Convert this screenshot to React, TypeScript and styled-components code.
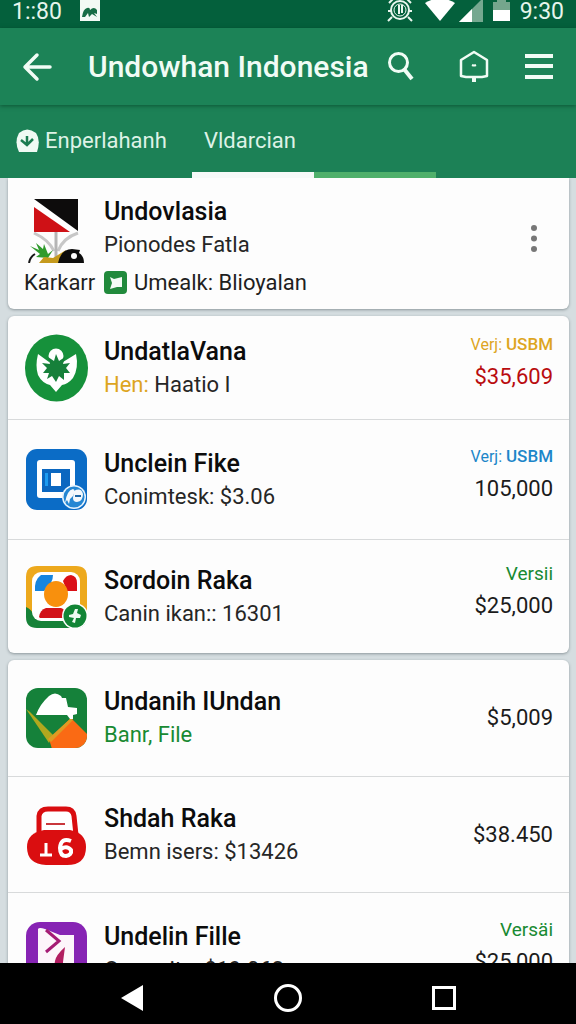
import React from "react";
import styled, { createGlobalStyle } from "styled-components";

const GlobalStyle = createGlobalStyle`
  * { box-sizing: border-box; }
  body {
    margin: 0;
    background: #d5dde0;
    font-family: Roboto, "Noto Sans", sans-serif;
    color: #1f1f1f;
  }
  button { font: inherit; color: inherit; background: none; border: 0; padding: 0; cursor: pointer; }
  a { color: inherit; text-decoration: none; }
  svg { display: block; }
  h1, h2, p, ul { margin: 0; padding: 0; }
`;

const Screen = styled.div`
  display: flex;
  flex-direction: column;
  height: 100vh;
`;

const StatusBar = styled.div`
  display: flex;
  justify-content: space-between;
  flex: none;
  height: 28px;
  padding: 0 12px;
  background: #04603c;
  color: #e6f5ec;
  font-size: 23px;
  line-height: 24px;
`;

const StatusGroup = styled.div<{ $gap: number }>`
  display: flex;
  gap: ${(p) => p.$gap}px;
`;

const AppBar = styled.header`
  display: flex;
  align-items: center;
  flex: none;
  height: 77px;
  padding: 0 22px 0 20px;
  background: #1c8357;
  color: #f1fcf5;
  box-shadow: 0 1px 4px rgba(0, 50, 25, 0.55);
  z-index: 1;
`;

const BarTitle = styled.h1`
  margin-left: 32px;
  flex: none;
  font-size: 30px;
  line-height: 40px;
  font-weight: 500;
  white-space: nowrap;
`;

const BarActions = styled.div`
  display: flex;
  flex: 1;
  align-items: center;
  gap: 30px;
  margin-left: 14px;
`;

const IconButton = styled.button`
  flex: none;
`;

const SearchButton = styled(IconButton)`
  margin-right: auto;
`;

const MoreButton = styled(IconButton)`
  margin-bottom: 16px;
`;

const Tabs = styled.nav`
  display: flex;
  flex: none;
  height: 73px;
  background: #1c8156;
  color: #def2e6;
`;

const Tab = styled.a<{ $line: string; $wide?: boolean }>`
  display: flex;
  align-items: center;
  gap: 6px;
  flex: none;
  width: ${(p) => (p.$wide ? 192 : 122)}px;
  padding: 4px 0 0 ${(p) => (p.$wide ? 16 : 12)}px;
  border-bottom: 6px solid ${(p) => p.$line};
  font-size: 22px;
  white-space: nowrap;
`;

const Main = styled.main`
  display: flex;
  flex-direction: column;
  gap: 7px;
  flex: 1;
  min-height: 0;
  overflow: hidden;
  padding: 0 7px 0 8px;
`;

const Card = styled.section<{ $attached?: boolean }>`
  flex: none;
  background: #fdfdfd;
  border-radius: ${(p) => (p.$attached ? "0 0 6px 6px" : "6px")};
  box-shadow: 0 1px 3px rgba(50, 65, 70, 0.45);
`;

const Featured = styled.div`
  display: flex;
  justify-content: space-between;
  align-items: center;
  height: 131px;
  padding: 6px 26px 0 16px;
`;

const FeaturedGrid = styled.div`
  display: grid;
  grid-template-columns: 64px auto;
  column-gap: 16px;
  row-gap: 4px;
  align-items: start;
`;

const Caption = styled.p`
  display: flex;
  align-items: center;
  gap: 7px;
  font-size: 22px;
  line-height: 32px;
  white-space: nowrap;
`;

const List = styled.ul`
  list-style: none;
`;

const Row = styled.li<{ $height: number }>`
  display: flex;
  align-items: center;
  gap: 16px;
  height: ${(p) => p.$height}px;
  padding: 0 16px;
  & + & { border-top: 1px solid #d8dadb; }
`;

const Body = styled.div`
  flex: 1;
  min-width: 0;
`;

const Name = styled.h2`
  font-size: 25px;
  line-height: 33px;
  font-weight: 500;
  color: #0c0c0c;
  white-space: nowrap;
`;

const Detail = styled.p<{ $color?: string }>`
  font-size: 22px;
  line-height: 33px;
  color: ${(p) => p.$color ?? "#262626"};
  white-space: nowrap;
`;

const Tint = styled.span<{ $color: string }>`
  color: ${(p) => p.$color};
`;

const Side = styled.div<{ $raised: boolean }>`
  flex: none;
  text-align: right;
  padding-bottom: ${(p) => (p.$raised ? 14 : 0)}px;
`;

const Label = styled.p<{ $color: string; $large?: boolean }>`
  font-size: ${(p) => (p.$large ? 19 : 16)}px;
  line-height: 32px;
  color: ${(p) => p.$color};
  b { font-size: 17px; font-weight: 500; }
`;

const Price = styled.p<{ $color?: string }>`
  font-size: 22px;
  line-height: 32px;
  color: ${(p) => p.$color ?? "#1b1b1b"};
`;

const NavBar = styled.footer`
  display: flex;
  justify-content: center;
  align-items: center;
  gap: 124px;
  flex: none;
  height: 61px;
  padding-top: 8px;
  background: #000;
`;

const LeafIcon = () => (
  <svg width="64" height="68" viewBox="0 0 64 68" aria-hidden="true">
    <ellipse cx="32.500" cy="34" rx="31.500" ry="33.500" fill="#16913b" />
    <circle cx="32" cy="22" r="7.500" fill="#fff" />
    <path d="M14 20 L25 28 L32 24 L39 28 L52 20 Q55 34 49 44 Q44 50 38 51 L32 58 L26 51 Q18 49 14 41 Q11 32 14 20Z" fill="#fff" />
    <path d="M32 20 L35 27 L41 23 L39 30 L46 29 L42 34 L46 39 L40 39 L40 46 L35 42 L32 48 L28 42 L23 45 L25 39 L19 39 L23 34 L18 29 L26 30 L24 23 L30 27Z" fill="#16803a" />
  </svg>
);

const FrameIcon = () => (
  <svg width="64" height="64" viewBox="0 0 64 64" aria-hidden="true">
    <rect x="2" y="1" width="61" height="61" rx="11" fill="#0b6cc6" />
    <rect x="13" y="12" width="38" height="38" rx="3" fill="#fff" />
    <rect x="18" y="21" width="28" height="23" fill="#0b67c0" />
    <rect x="21" y="25" width="3" height="13" fill="#1e9cf0" />
    <rect x="27" y="25" width="10" height="13" fill="#fff" />
    <circle cx="50" cy="49" r="12" fill="#e8f4fd" />
    <circle cx="50" cy="49" r="10.500" fill="#2587d3" />
    <path d="M41 55 Q43 42 49 41 Q52 42 49 48 L46 51 L45 56 L43 52Z" fill="#f3f8fc" />
    <path d="M50 43 Q57 39 59 46 Q59 53 53 54 Q49 54 49 50Z" fill="#f3f8fc" />
    <path d="M51 48h6" stroke="#1c65a5" strokeWidth="2" />
  </svg>
);

const PeopleIcon = () => (
  <svg width="64" height="64" viewBox="0 0 64 64" aria-hidden="true">
    <path d="M2 43 V12 Q2 1 13 1 H52 Q63 1 63 12 V50 H2Z" fill="#eda91d" />
    <path d="M2 42 Q7 44 10 50 H63 Q63 63 52 63 H13 Q2 63 2 52Z" fill="#168238" />
    <rect x="8" y="7" width="48" height="49" rx="9" fill="#fff" />
    <path d="M11 26 Q10 15 17 10 H29 Q29 19 20 26Z" fill="#1685df" />
    <path d="M39 16 Q42 10 47 10 Q53 11 53 18 V26 H43Z" fill="#da1017" />
    <path d="M15 52 Q16 45 22 43 H37 Q42 44 42 53 H16Z" fill="#d21319" />
    <ellipse cx="32" cy="29" rx="12" ry="13" fill="#f8900d" />
    <circle cx="51" cy="51" r="13" fill="#fff" />
    <circle cx="51" cy="51" r="11.500" fill="#128536" />
    <path d="M51 44 L54 44 L53 48 L57 50 L56 53 L52 53 L51 58 L48 57 L50 53 L45 52 L45 50 L49 49Z" fill="#effaf1" />
  </svg>
);

const HillIcon = () => (
  <svg width="64" height="62" viewBox="0 0 64 62" aria-hidden="true">
    <defs>
      <clipPath id="hill-shape"><rect x="2" y="1" width="61" height="60" rx="12" /></clipPath>
    </defs>
    <g clipPath="url(#hill-shape)">
      <rect width="64" height="62" fill="#15813a" />
      <path d="M2 22 L6 25 L29 48 L25 56Z" fill="#b0a81e" />
      <path d="M25 52 L47 31 L64 48 V62 H28Z" fill="#fa6a14" />
      <path d="M24 52 L47 31 L49 33 L27 55Z" fill="#df9b23" />
      <path d="M12 28 Q16 17 25 9 Q31 4 37 9 L38 11 L42 11 L44 20 L53 21 V27 L49 28 V32 H46 L43 28Z" fill="#fff" />
    </g>
  </svg>
);

const LockIcon = () => (
  <svg width="64" height="64" viewBox="0 0 64 64" aria-hidden="true">
    <path d="M15 32 V13 Q16 6 24 6 H42 Q49 6 50 13 L52 32" fill="#fff" stroke="#d90d10" strokeWidth="5" />
    <path d="M22 21h19" stroke="#c9373c" strokeWidth="2" />
    <path d="M20 27 H46 Q62 30 62 44 Q62 62 43 62 H22 Q3 61 3 44 Q3 30 20 27Z" fill="#da0e10" />
    <path d="M22 40v11M16 52h12" stroke="#fff" strokeWidth="3" fill="none" />
    <path d="M47 38 Q37 34 36 45 Q36 53 42 53 Q48 52 47 47 Q43 42 37 46" fill="none" stroke="#fff" strokeWidth="4" />
  </svg>
);

const BookIcon = () => (
  <svg width="64" height="64" viewBox="0 0 64 64" aria-hidden="true">
    <rect x="2" y="1" width="61" height="62" rx="14" fill="#8724b4" />
    <path d="M14 8 Q15 6 21 8 L36 14 L50 14 V60 H14Z" fill="#fdf5fb" />
    <path d="M22 9 L35 20 L22 31" fill="none" stroke="#a51b75" strokeWidth="3" />
    <path d="M41 26 Q32 34 31 40 L29 54 H39 V41Z" fill="#b21c61" />
  </svg>
);

const FlagIcon = () => (
  <svg width="64" height="68" viewBox="0 -3 64 68" aria-hidden="true">
    <rect x="10" y="1" width="44" height="33" fill="#fff" />
    <path d="M10 1 H54 V33Z" fill="#0d0c0c" />
    <path d="M10 9 L46 34 H10Z" fill="#cf1116" />
    <path d="M10 35 Q25 42 30 53 M54 35 Q39 40 34 53" fill="none" stroke="#c7c7c7" strokeWidth="3" />
    <path d="M32 34V60" stroke="#b5b5b5" strokeWidth="3" />
    <path d="M11 56 Q6 59 5 65" fill="none" stroke="#171717" strokeWidth="2" />
    <path d="M6 48 L15 52 L12 45 L19 51 L20 46 L24 56 L29 52 L24 60 L12 59 L16 56Z" fill="#2f9b2c" />
    <path d="M15 65 L20 59 L29 60 L42 52 L35 65Z" fill="#c59a1d" />
    <path d="M34 65 Q37 51 48 51 L56 52 L55 55 Q60 58 60 65Z" fill="#0d0d0d" />
    <circle cx="50" cy="58" r="3" fill="#fff" />
  </svg>
);

type Item = {
  name: string;
  lead?: string;
  detail: string;
  detailColor?: string;
  label?: string;
  unit?: string;
  labelColor?: string;
  price: string;
  priceColor?: string;
  height: number;
  Icon: () => React.JSX.Element;
};

const groups: Item[][] = [
  [
    { name: "UndatlaVana", lead: "Hen:", detail: "Haatio I", label: "Verj:", unit: "USBM", labelColor: "#dda51f", price: "$35,609", priceColor: "#b90c0f", height: 103, Icon: LeafIcon },
    { name: "Unclein Fike", detail: "Conimtesk: $3.06", label: "Verj:", unit: "USBM", labelColor: "#1c86c9", price: "105,000", height: 120, Icon: FrameIcon },
    { name: "Sordoin Raka", detail: "Canin ikan:: 16301", label: "Versii", labelColor: "#188a32", price: "$25,000", height: 114, Icon: PeopleIcon },
  ],
  [
    { name: "Undanih IUndan", detail: "Banr, File", detailColor: "#188a32", price: "$5,009", height: 116, Icon: HillIcon },
    { name: "Shdah Raka", detail: "Bemn isers: $13426", price: "$38.450", height: 116, Icon: LockIcon },
    { name: "Undelin Fille", detail: "Commits: $19.063", label: "Versäi", labelColor: "#188a32", price: "$25,000", height: 120, Icon: BookIcon },
  ],
];

export default function App() {
  return (
    <>
      <GlobalStyle />
      <Screen>
        <StatusBar>
          <StatusGroup $gap={18}>
            <span>1::80</span>
            <svg width="21" height="22" viewBox="0 0 21 22" aria-hidden="true">
              <path d="M0 0h20v21H0z" fill="#f3faf5" />
              <path d="M2 17 Q3 9 7 8 Q10 7 10 10 Q14 6 17 10 V14 L14 13 L17 17 L12 14 L9 17 L8 13 L5 17Z" fill="#176d46" />
            </svg>
          </StatusGroup>
          <StatusGroup $gap={8}>
            <svg width="130" height="24" viewBox="0 0 130 24" aria-hidden="true">
              <g fill="none" stroke="#eaf7ef" strokeWidth="2">
                <circle cx="18" cy="10" r="9" />
                <circle cx="18" cy="10" r="6" strokeWidth="1" />
                <path d="M7 3l4-4M29 3l-4-4M10 17l-4 4M26 17l4 4M6 11h3M27 11h3" />
                <path d="M17 5v9M20 5v8" />
              </g>
              <path d="M43 3 Q58-6 73 3 L58 21Z" fill="#fff" />
              <path d="M77 22 L101-2 V22Z" fill="#76a890" />
              <path d="M77 22 L90 9 V22Z" fill="#fff" />
              <path d="M111 2h4V0h9v2h4v8h-17Z" fill="#75a68d" />
              <path d="M111 10h17v11h-17Z" fill="#fff" />
            </svg>
            <span>9:30</span>
          </StatusGroup>
        </StatusBar>

        <AppBar>
          <IconButton aria-label="Back">
            <svg width="36" height="32" viewBox="0 0 36 32" fill="none" stroke="currentColor" strokeWidth="3.500" strokeLinecap="round" strokeLinejoin="round">
              <path d="M30 16H5M17 4L5 16l12 12" />
            </svg>
          </IconButton>
          <BarTitle>Undowhan Indonesia</BarTitle>
          <BarActions>
            <SearchButton aria-label="Search">
              <svg width="36" height="36" viewBox="0 0 36 36" fill="none" stroke="currentColor">
                <circle cx="15.500" cy="13.500" r="9" strokeWidth="3" />
                <path d="M21 20l8 10" strokeWidth="4" />
              </svg>
            </SearchButton>
            <IconButton aria-label="Notifications">
              <svg width="36" height="36" viewBox="0 0 36 36" fill="none" stroke="currentColor" strokeWidth="2.500" strokeLinejoin="round">
                <path d="M18 3l13 8v16l-5 1H10l-5-1V11Z" />
                <path d="M16 16q2 1 4 0" strokeWidth="2" />
                <path d="M18 28v5" strokeWidth="4" />
              </svg>
            </IconButton>
            <IconButton aria-label="Menu">
              <svg width="32" height="32" viewBox="0 0 32 32" stroke="currentColor" strokeWidth="4">
                <path d="M3 5h28M3 15h28M3 26h28" />
              </svg>
            </IconButton>
          </BarActions>
        </AppBar>

        <Tabs>
          <Tab href="#first" $wide $line="transparent">
            <svg width="23" height="24" viewBox="0 0 23 24" aria-hidden="true">
              <path d="M3 4 Q11-3 20 4 Q25 11 21 23 H3 Q-2 13 3 4Z" fill="#f0faf4" />
              <path d="M5 11l6 5 6-6M11 7v9" fill="none" stroke="#1b7b50" strokeWidth="2.500" />
            </svg>
            Enperlahanh
          </Tab>
          <Tab href="#second" $line="#f6f9f8" aria-current="page">Vldarcian</Tab>
          <Tab as="span" $line="#4fb06b" />
        </Tabs>

        <Main>
          <Card $attached>
            <Featured>
              <FeaturedGrid>
                <FlagIcon />
                <div>
                  <Name>Undovlasia</Name>
                  <Detail>Pionodes Fatla</Detail>
                </div>
                <Caption>Karkarr</Caption>
                <Caption>
                  <svg width="23" height="23" viewBox="0 0 23 23" aria-hidden="true">
                    <rect width="23" height="23" rx="4" fill="#218a3c" />
                    <path d="M6 6 L10 8 L18 6 V16 L13 16 L6 18 L8 12Z" fill="#f4fbf5" />
                  </svg>
                  Umealk: Blioyalan
                </Caption>
              </FeaturedGrid>
              <MoreButton aria-label="More options">
                <svg width="18" height="32" viewBox="0 0 18 32" fill="#777">
                  <circle cx="9" cy="5" r="3" />
                  <circle cx="9" cy="15.500" r="3" />
                  <circle cx="9" cy="26" r="3" />
                </svg>
              </MoreButton>
            </Featured>
          </Card>

          {groups.map((items, index) => (
            <Card key={index}>
              <List>
                {items.map(({ Icon, ...item }) => (
                  <Row key={item.name} $height={item.height}>
                    <Icon />
                    <Body>
                      <Name>{item.name}</Name>
                      <Detail $color={item.detailColor}>
                        {item.lead && <Tint $color="#dda51f">{item.lead} </Tint>}
                        {item.detail}
                      </Detail>
                    </Body>
                    <Side $raised={Boolean(item.label)}>
                      {item.label && (
                        <Label $color={item.labelColor ?? "#188a32"} $large={!item.unit}>
                          {item.label} {item.unit && <b>{item.unit}</b>}
                        </Label>
                      )}
                      <Price $color={item.priceColor}>{item.price}</Price>
                    </Side>
                  </Row>
                ))}
              </List>
            </Card>
          ))}
        </Main>

        <NavBar>
          <IconButton aria-label="Back">
            <svg width="32" height="32" viewBox="0 0 32 32"><path d="M5 16L27 3v26Z" fill="#fff" /></svg>
          </IconButton>
          <IconButton aria-label="Home">
            <svg width="32" height="32" viewBox="0 0 32 32"><circle cx="16" cy="16" r="12.500" fill="none" stroke="#fff" strokeWidth="3" /></svg>
          </IconButton>
          <IconButton aria-label="Recent apps">
            <svg width="32" height="32" viewBox="0 0 32 32"><rect x="5.500" y="5.500" width="21" height="21" fill="none" stroke="#fff" strokeWidth="3" /></svg>
          </IconButton>
        </NavBar>
      </Screen>
    </>
  );
}
